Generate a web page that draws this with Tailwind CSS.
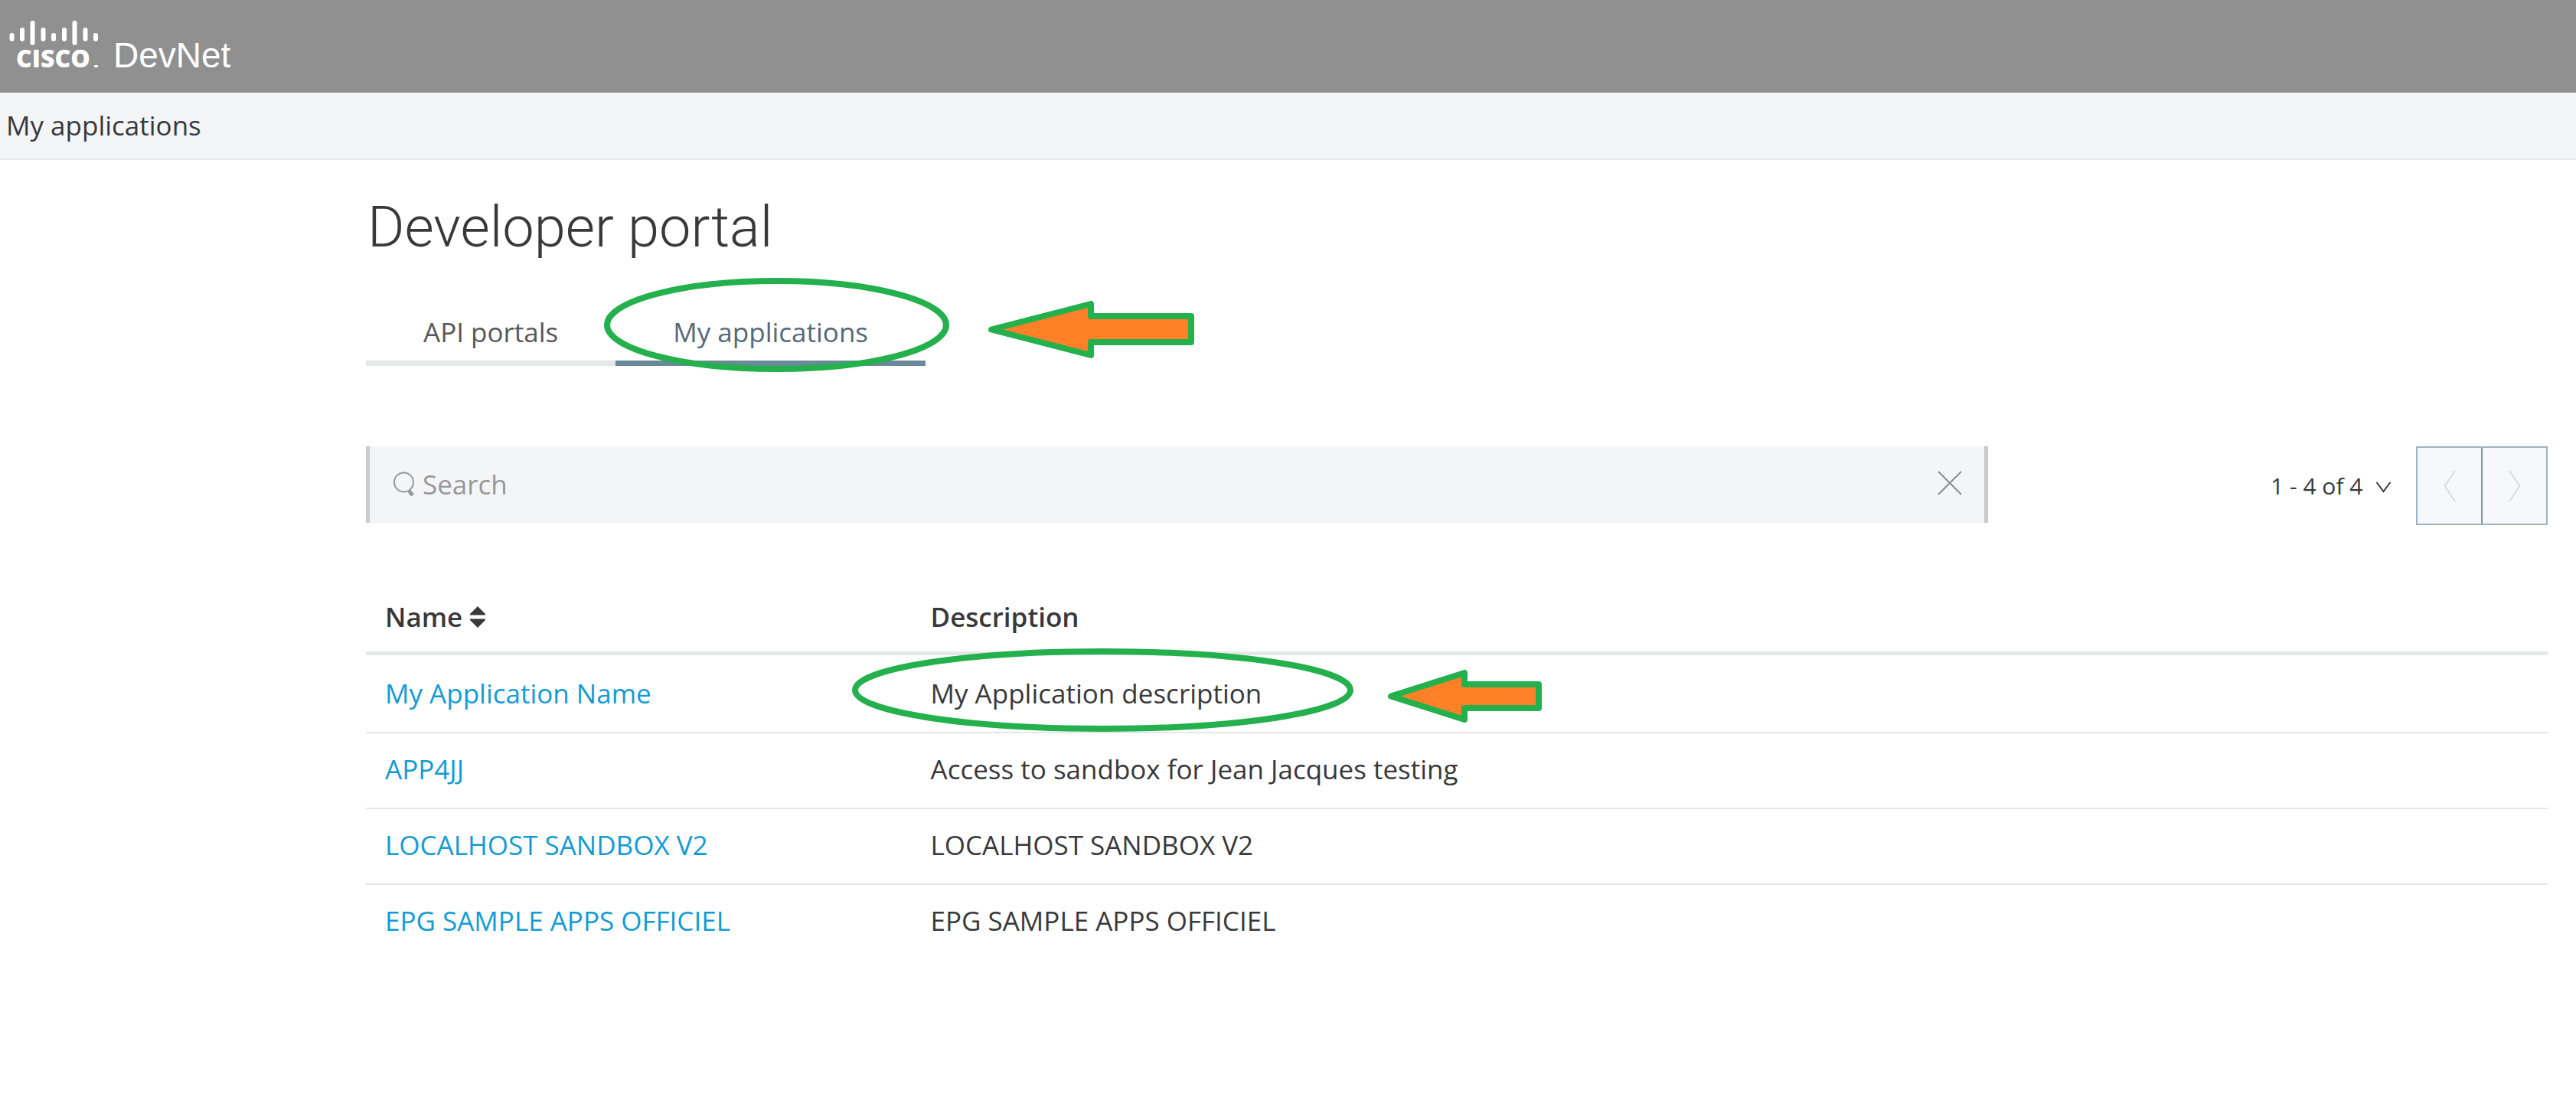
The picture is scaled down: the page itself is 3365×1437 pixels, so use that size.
<!DOCTYPE html>
<html lang="en">
<head>
<meta charset="utf-8">
<title>Developer portal</title>
<script src="https://cdn.jsdelivr.net/npm/@tailwindcss/browser@4"></script>
</head>
<body class="min-h-screen bg-white font-['Open_Sans',sans-serif] text-[35px] leading-[48px] text-[#39393b]">
  <header class="flex h-[121px] items-start bg-[#909090]">
    <a href="#" aria-label="Cisco DevNet" class="block">
      <svg width="320" height="121" viewBox="0 0 320 121" fill="#fff">
        <g stroke="#fff" stroke-width="6" stroke-linecap="round">
          <path d="M15.500 46v5M29 39v12M42.500 30v26M56.500 39v12M70 46v5M84 39v12M97.500 30v26M111.500 39v12M125 46v5"/>
        </g>
        <text x="21" y="88" font-family="Open Sans, sans-serif" font-weight="800" font-size="32">CISCO</text>
        <rect x="123" y="85" width="5" height="3" rx="1"/>
        <text x="148" y="88" font-family="Liberation Sans, Arial, sans-serif" font-size="46">DevNet</text>
      </svg>
    </a>
  </header>
  <div class="border-b-2 border-[#e6e7e8] bg-[#f3f5f7] px-2 pt-[19px] pb-[19px]">My applications</div>

  <main class="pt-10 pr-[37px] pl-[478px]">
    <h1 class="pl-0.5 font-[Roboto,sans-serif] text-[74px] leading-[96px] font-light">Developer portal</h1>

    <nav class="mt-[65px] flex">
      <a href="#" class="border-b-[7px] border-[#e6e7e8] px-[75px] pb-[13px] text-[#58585b]">API portals</a>
      <a href="#" aria-current="page" class="relative border-b-[7px] border-[#6b8a99] px-[75px] pb-[13px] text-[#56697a]">My applications
        <svg class="absolute -top-[47px] -left-[15px]" width="451" height="123" viewBox="0 0 451 123" fill="none" stroke="#24b04c" stroke-width="8"><ellipse cx="225.500" cy="61.500" rx="221.500" ry="57.500"/></svg>
        <svg class="absolute -top-[17px] left-[487px]" width="270" height="76" viewBox="0 0 270 76" fill="#ff8027" stroke="#24b04c" stroke-width="8" stroke-linejoin="round"><path d="M4 37.500 134 4v16h131v34H134v17z"/></svg>
      </a>
    </nav>

    <div class="mt-[105px] flex items-start">
      <form role="search" class="flex h-[100px] flex-1 items-center border-x-[5px] border-[#c8cacb] bg-[#f3f5f7] pr-[29px] pl-[31px]">
        <svg class="shrink-0" width="38" height="36" viewBox="0 0 38 36" fill="none" stroke="#98989a"><circle cx="13.500" cy="15" r="12.500" stroke-width="2"/><path d="m20.500 26.500 4.500 5.500" stroke-width="5"/></svg>
        <input type="text" aria-label="Search" placeholder="Search" class="h-12 min-w-0 flex-1 bg-transparent placeholder:text-[#98989a] placeholder:opacity-100">
        <button type="button" aria-label="Clear search" class="mb-1 shrink-0"><svg width="32" height="32" viewBox="0 0 32 32" stroke="#8a8f94" stroke-width="2"><path d="m1 1 30 30M31 1 1 31"/></svg></button>
      </form>
      <div class="flex w-[731px] items-center justify-end">
        <div class="relative mr-8 text-[30px]">
          <select aria-label="Page range" class="h-12 w-[158px] appearance-none bg-transparent">
            <option>1 - 4 of 4</option>
          </select>
          <svg class="pointer-events-none absolute top-[18px] right-0" width="21" height="15" viewBox="0 0 21 15" fill="none" stroke="#39393b" stroke-width="2"><path d="m1.500 1 9 12 9-12"/></svg>
        </div>
        <div class="flex h-[103px] border-2 border-[#9fb3be] bg-[#f7f8fb]">
          <button type="button" aria-label="Previous page" class="flex w-[85px] items-center justify-center border-r-2 border-[#8299a8]"><svg width="16" height="42" viewBox="0 0 16 42" fill="none" stroke="#dadbdd" stroke-width="2"><path d="M15 1 1.500 21 15 41"/></svg></button>
          <button type="button" aria-label="Next page" class="flex w-[83px] items-center justify-center"><svg width="16" height="42" viewBox="0 0 16 42" fill="none" stroke="#dadbdd" stroke-width="2"><path d="m1 1 13.500 20L1 41"/></svg></button>
        </div>
      </div>
    </div>

    <table class="mt-[73px] w-full table-fixed border-separate border-spacing-0 text-left">
      <thead>
        <tr>
          <th scope="col" class="w-1/4 border-b-[5px] border-[#e6e7e8] px-[25px] pt-[23px] pb-[21px] font-semibold">
            <button type="button" class="flex items-center gap-2.5">Name<svg width="20" height="28" viewBox="0 0 20 28" fill="#39393b"><path d="M10 0 20 10v1.500H0V10zM0 16.500h20V18L10 28 0 18z"/></svg></button>
          </th>
          <th scope="col" class="border-b-[5px] border-[#e6e7e8] px-[25px] pt-[23px] pb-[21px] font-semibold">Description</th>
        </tr>
      </thead>
      <tbody>
        <tr>
          <td class="border-b-2 border-[#e6e7e8] px-[25px] pt-[26px] pb-[26px]"><a href="#" class="text-[#149bd5]">My Application Name</a></td>
          <td class="relative border-b-2 border-[#e6e7e8] px-[25px] pt-[26px] pb-[26px]">My Application description
            <svg class="absolute -top-[9px] -left-[78px]" width="655" height="109" viewBox="0 0 655 109" fill="none" stroke="#24b04c" stroke-width="8"><ellipse cx="327.500" cy="54.500" rx="323.500" ry="50.500"/></svg>
            <svg class="absolute top-[19px] left-[622px]" width="201" height="70" viewBox="0 0 201 70" fill="#ff8027" stroke="#24b04c" stroke-width="8" stroke-linejoin="round"><path d="M4 34.500 100 4v15h97v31h-97v15z"/></svg>
          </td>
        </tr>
        <tr>
          <td class="border-b-2 border-[#e6e7e8] px-[25px] pt-[23px] pb-[26px]"><a href="#" class="text-[#149bd5]">APP4JJ</a></td>
          <td class="border-b-2 border-[#e6e7e8] px-[25px] pt-[23px] pb-[26px]">Access to sandbox for Jean Jacques testing</td>
        </tr>
        <tr>
          <td class="border-b-2 border-[#e6e7e8] px-[25px] pt-[23px] pb-[26px]"><a href="#" class="text-[#149bd5]">LOCALHOST SANDBOX V2</a></td>
          <td class="border-b-2 border-[#e6e7e8] px-[25px] pt-[23px] pb-[26px]">LOCALHOST SANDBOX V2</td>
        </tr>
        <tr>
          <td class="px-[25px] pt-[23px] pb-[26px]"><a href="#" class="text-[#149bd5]">EPG SAMPLE APPS OFFICIEL</a></td>
          <td class="px-[25px] pt-[23px] pb-[26px]">EPG SAMPLE APPS OFFICIEL</td>
        </tr>
      </tbody>
    </table>
  </main>
</body>
</html>
